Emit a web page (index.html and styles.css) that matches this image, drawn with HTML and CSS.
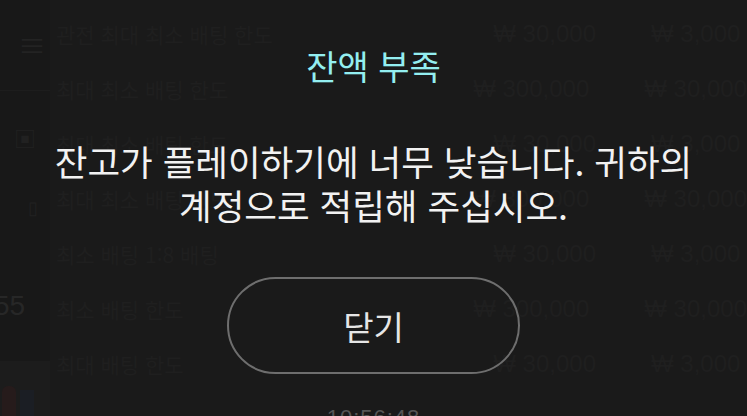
FILE: index.html
```html
<!DOCTYPE html>
<html lang="ko">
<head>
<meta charset="utf-8">
<link rel="stylesheet" href="styles.css">
</head>
<body>
<div class="app">
  <div class="side">
    <div class="side-top"><span class="menu-ico">≡</span></div>
    <div class="side-mid"><span class="side-ico">▣</span><span class="side-ico small">▯</span></div>
    <div class="side-num">55</div>
    <div class="side-pic"><span class="pic-red"></span><span class="pic-blue"></span></div>
  </div>
  <div class="table">
    <div class="row"><span class="c1">관전 최대 최소 배팅 한도</span><span class="c2">₩ 30,000</span><span class="c3">₩ 3,000</span></div>
    <div class="row"><span class="c1">최대 최소 배팅 한도</span><span class="c2">₩ 300,000</span><span class="c3">₩ 30,000</span></div>
    <div class="row"><span class="c1">최대 최소 배팅 한도</span><span class="c2">₩ 30,000</span><span class="c3">₩ 3,000</span></div>
    <div class="row"><span class="c1">최대 최소 배팅 한도</span><span class="c2">₩ 300,000</span><span class="c3">₩ 30,000</span></div>
    <div class="row"><span class="c1">최소 배팅 1:8 배팅</span><span class="c2">₩ 30,000</span><span class="c3">₩ 3,000</span></div>
    <div class="row"><span class="c1">최소 배팅 한도</span><span class="c2">₩ 300,000</span><span class="c3">₩ 30,000</span></div>
    <div class="row"><span class="c1">최대 배팅 한도</span><span class="c2">₩ 30,000</span><span class="c3">₩ 3,000</span></div>
  </div>
</div>
<div class="overlay">
  <div class="modal">
    <h1 class="title">잔액 부족</h1>
    <p class="msg">잔고가 플레이하기에 너무 낮습니다. 귀하의<br>계정으로 적립해 주십시오.</p>
    <button class="close">닫기</button>
    <div class="time">10:56:48</div>
  </div>
</div>
</body>
</html>
```

FILE: styles.css
```css
html, body {
  margin: 0;
  padding: 0;
  width: 747px;
  height: 416px;
  overflow: hidden;
  background: #1a1a1a;
  font-family: "Noto Sans CJK KR", "Noto Sans", sans-serif;
}
.app {
  display: flex;
  width: 747px;
  height: 416px;
  overflow: hidden;
}
.side {
  width: 50px;
  display: flex;
  flex-direction: column;
  background: #181818;
  color: #222;
  overflow: hidden;
}
.side-top {
  height: 90px;
  flex-shrink: 0;
  display: flex;
  justify-content: flex-end;
  align-items: center;
  padding-right: 4px;
  border-bottom: 1px solid #1d1d1d;
}
.menu-ico {
  font-size: 28px;
  color: #232323;
}
.side-mid {
  height: 160px;
  flex-shrink: 0;
  display: flex;
  flex-direction: column;
  align-items: center;
  gap: 40px;
  padding-top: 30px;
  box-sizing: border-box;
}
.side-ico { font-size: 22px; color: #212121; }
.side-ico.small { font-size: 18px; margin-left: 16px; }
.side-num {
  height: 110px;
  flex-shrink: 0;
  display: flex;
  align-items: center;
  font-family: "Liberation Sans", sans-serif;
  font-size: 28px;
  color: #272727;
  margin-left: -6px;
}
.side-pic {
  flex: 1;
  background: #1c1c1c;
  display: flex;
  align-items: flex-end;
  gap: 4px;
  padding-left: 2px;
}
.pic-red { width: 14px; height: 30px; background: #261b1b; border-radius: 6px 6px 0 0; }
.pic-blue { width: 14px; height: 26px; background: #1b1e24; }
.table {
  flex: 1;
  display: flex;
  flex-direction: column;
  padding-top: 6px;
  overflow: hidden;
}
.row {
  height: 55px;
  display: flex;
  align-items: center;
  font-size: 21px;
  color: #1f1f1f;
  flex-shrink: 0;
  white-space: nowrap;
}
.c1 { width: 250px; padding-left: 6px; overflow: hidden; }
.c2 { width: 290px; text-align: right; font-family: "Liberation Sans", sans-serif; font-size: 24px; }
.c3 { padding-left: 55px; font-family: "Liberation Sans", sans-serif; font-size: 24px; }
.overlay {
  position: absolute;
  left: 0;
  top: 0;
  width: 747px;
  height: 416px;
  overflow: hidden;
}
.modal {
  display: flex;
  flex-direction: column;
  align-items: center;
  padding-top: 46px;
}
.title {
  margin: 0;
  font-size: 34px;
  line-height: 40px;
  font-weight: 400;
  color: #93eef0;
}
.msg {
  margin: 53px 0 0;
  font-size: 35.5px;
  line-height: 44px;
  text-align: center;
  color: #f2f2f2;
  font-weight: 400;
}
.close {
  margin-top: 50px;
  width: 293px;
  height: 97px;
  border: 2px solid #6e6e6e;
  border-radius: 49px;
  background: transparent;
  color: #e6e6e6;
  font-family: inherit;
  font-size: 33px;
  padding: 0;
}
.time {
  margin-top: 31px;
  font-family: "Liberation Sans", sans-serif;
  font-size: 22px;
  line-height: 26px;
  color: #555;
  letter-spacing: 1px;
}
```
